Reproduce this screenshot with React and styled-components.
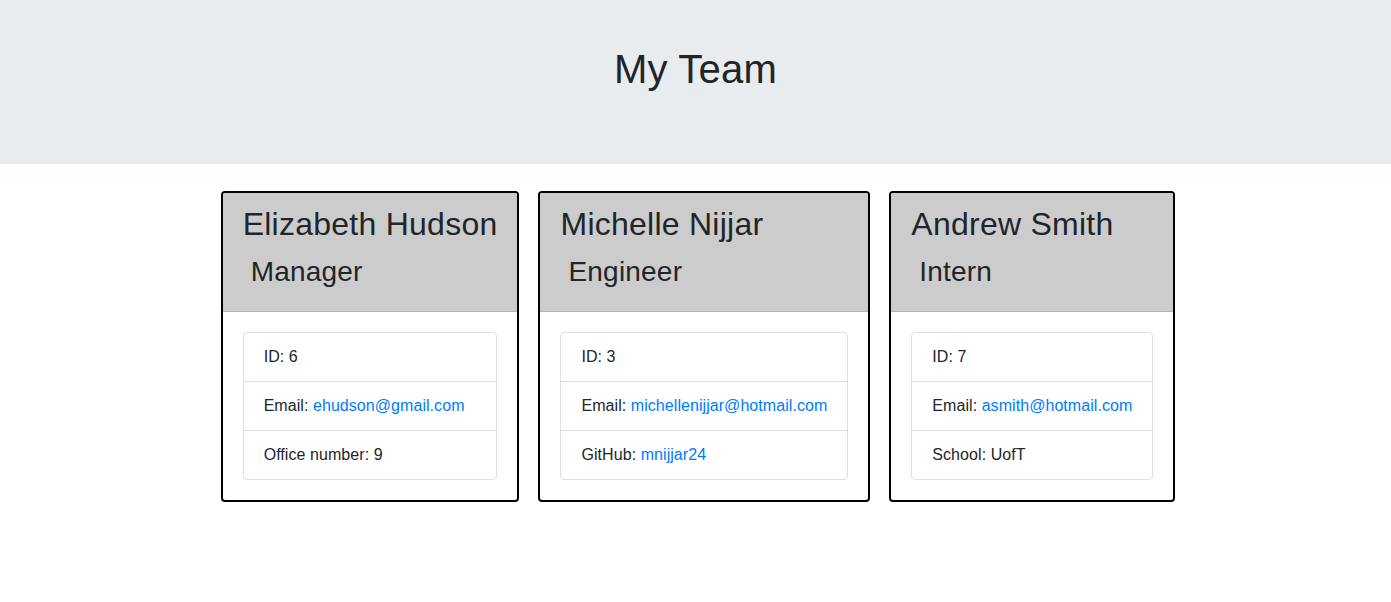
import styled, { createGlobalStyle } from "styled-components";

const GlobalStyle = createGlobalStyle`
  body {
    margin: 0;
    font-family: "Liberation Sans", Arial, sans-serif;
    font-size: 16px;
    line-height: 1.5;
    color: #212529;
    background: #fff;
  }
`;

const team = [
  {
    name: "Elizabeth Hudson",
    role: "Manager",
    id: 6,
    email: "ehudson@gmail.com",
    extra: { label: "Office number", value: "9" },
  },
  {
    name: "Michelle Nijjar",
    role: "Engineer",
    id: 3,
    email: "michellenijjar@hotmail.com",
    extra: { label: "GitHub", value: "mnijjar24", link: true },
  },
  {
    name: "Andrew Smith",
    role: "Intern",
    id: 7,
    email: "asmith@hotmail.com",
    extra: { label: "School", value: "UofT" },
  },
];

const App = () => {
  return (
    <>
      <GlobalStyle />
      <Jumbotron>
        <Title>My Team</Title>
      </Jumbotron>
      <CardRow>
        {team.map((member) => (
          <Card key={member.id}>
            <CardHeader>
              <Name>{member.name}</Name>
              <Role>{member.role}</Role>
            </CardHeader>
            <CardBody>
              <ListGroup>
                <ListItem>ID: {member.id}</ListItem>
                <ListItem>
                  Email: <Link href={`mailto:${member.email}`}>{member.email}</Link>
                </ListItem>
                <ListItem>
                  {member.extra.label}:{" "}
                  {member.extra.link ? (
                    <Link href="#">{member.extra.value}</Link>
                  ) : (
                    member.extra.value
                  )}
                </ListItem>
              </ListGroup>
            </CardBody>
          </Card>
        ))}
      </CardRow>
    </>
  );
};

export default App;

const Jumbotron = styled.header`
  background-color: #e9ecef;
  height: 164px;
  box-sizing: border-box;
  padding-top: 45px;
  margin-bottom: 27px;
  text-align: center;
`;
const Title = styled.h1`
  margin: 0;
  font-size: 40px;
  font-weight: 500;
  line-height: 1.2;
  letter-spacing: 0.2px;
`;
const CardRow = styled.main`
  display: flex;
  justify-content: center;
  align-items: flex-start;
  gap: 19px;
  padding-left: 5px;
`;
const Card = styled.section`
  border: 2px solid #000;
  border-radius: 4px;
  overflow: hidden;
  background: #fff;
`;
const CardHeader = styled.div`
  background-color: #ccc;
  padding: 12px 20px 22px;
  border-bottom: 1px solid rgba(0, 0, 0, 0.125);
`;
const Name = styled.h2`
  margin: 0 0 12px;
  font-size: 32px;
  font-weight: 500;
  line-height: 1.2;
  letter-spacing: 0.25px;
  white-space: nowrap;
`;
const Role = styled.h3`
  margin: 0;
  padding-left: 8px;
  font-size: 28px;
  font-weight: 500;
  line-height: 1.2;
  letter-spacing: 0.2px;
`;
const CardBody = styled.div`
  padding: 20px;
`;
const ListGroup = styled.ul`
  margin: 0;
  padding: 0;
  list-style: none;
  border: 1px solid rgba(0, 0, 0, 0.125);
  border-radius: 4px;
`;
const ListItem = styled.li`
  padding: 12px 20px;
  white-space: nowrap;
  letter-spacing: 0.06px;
  & + & {
    border-top: 1px solid rgba(0, 0, 0, 0.125);
  }
`;
const Link = styled.a`
  color: #007bff;
  text-decoration: none;
`;
